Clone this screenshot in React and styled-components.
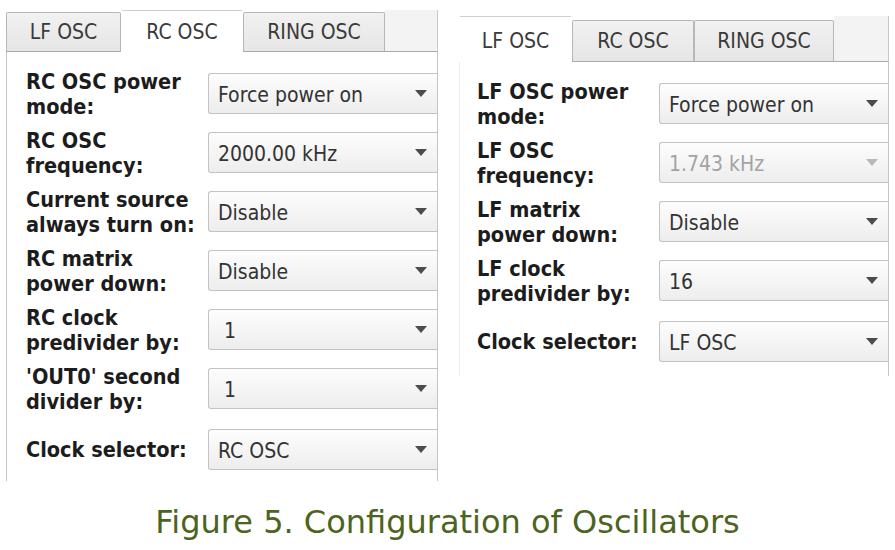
import React from 'react';
import styled, { createGlobalStyle } from 'styled-components';

const UI_FONT = '"DejaVu Sans Condensed", "DejaVu Sans", "Liberation Sans", sans-serif';

const GlobalStyle = createGlobalStyle`
  html, body {
    margin: 0;
    background: #fff;
  }
`;

const Page = styled.div`
  width: 895px;
  height: 550px;
  display: flex;
  flex-direction: column;
  overflow: hidden;
`;

const Figures = styled.div`
  display: flex;
  align-items: flex-start;
  gap: 21px;
  padding-left: 6px;
`;

const Panel = styled.div`
  width: ${(p) => p.$width}px;
  margin-top: ${(p) => p.$top}px;
  display: flex;
  flex-direction: column;
  font-family: ${UI_FONT};
  font-stretch: condensed;
`;

const TabBar = styled.div`
  display: flex;
  align-items: flex-end;
  height: ${(p) => p.$height}px;
`;

const Tab = styled.div`
  box-sizing: border-box;
  width: ${(p) => p.$width}px;
  height: ${(p) => (p.$active ? '100%' : `${p.$height}px`)};
  display: flex;
  align-items: center;
  justify-content: center;
  font-size: 21px;
  color: #3a3a3a;
  background: ${(p) => (p.$active ? '#fff' : 'linear-gradient(#f1f1f1, #e6e6e6)')};
  border: 1px solid ${(p) => (p.$active ? 'transparent' : '#b7b7b7')};
  border-top-color: ${(p) => (p.$active ? '#cfcfcf' : '#b7b7b7')};
  border-bottom: ${(p) => (p.$active ? 'none' : '1px solid #a9a9a9')};
  border-radius: 2px 2px 0 0;
  padding-top: ${(p) => (p.$active ? p.$lift - 2 : 0)}px;
`;

const Filler = styled.div`
  box-sizing: border-box;
  flex: 1;
  height: 100%;
  background: #f3f3f3;
  border-right: 1px solid #c9c9c9;
  border-bottom: 1px solid #a9a9a9;
`;

const Body = styled.div`
  box-sizing: border-box;
  display: grid;
  grid-template-columns: 182px 1fr;
  grid-auto-rows: 41px;
  row-gap: 18px;
  padding: 21px 0 ${(p) => p.$bottom}px ${(p) => p.$left}px;
  border-left: 1px solid ${(p) => p.$edge};
  border-right: 1px solid #c4c4c4;
  overflow: hidden;
`;

const Label = styled.div`
  display: flex;
  align-items: center;
  height: 41px;
  margin-top: ${(p) => (p.$last ? 2 : 0)}px;
  font-size: 21.5px;
  font-weight: bold;
  line-height: 25px;
  color: #1c1c1c;
  white-space: pre-line;
`;

const Select = styled.div`
  box-sizing: border-box;
  height: 41px;
  margin-top: ${(p) => (p.$last ? 2 : 0)}px;
  display: flex;
  align-items: center;
  justify-content: space-between;
  padding: 0 9px;
  border: 1px solid #c3c3c3;
  border-right: none;
  border-radius: 3px 0 0 3px;
  background: linear-gradient(#fdfdfd, #ededed);
  font-size: 21px;
  color: ${(p) => (p.$disabled ? '#a3a3a3' : '#333')};
`;

const Value = styled.span`
  padding-top: 3px;
`;

const Arrow = styled.span`
  width: 0;
  height: 0;
  margin-right: 1px;
  border-left: 6px solid transparent;
  border-right: 6px solid transparent;
  border-top: 7px solid ${(p) => (p.$disabled ? '#b8b8b8' : '#4c4c4c')};
`;

const Caption = styled.div`
  margin-top: 21px;
  text-align: center;
  font-family: "DejaVu Sans", Verdana, sans-serif;
  font-size: 32px;
  line-height: 40px;
  color: #4d6421;
`;

const rcRows = [
  ['RC OSC power\nmode:', 'Force power on'],
  ['RC OSC\nfrequency:', '2000.00 kHz'],
  ['Current source\nalways turn on:', 'Disable'],
  ['RC matrix\npower down:', 'Disable'],
  ['RC clock\npredivider by:', '\u00a01'],
  ["'OUT0' second\ndivider by:", '\u00a01'],
  ['Clock selector:', 'RC OSC'],
];

const lfRows = [
  ['LF OSC power\nmode:', 'Force power on'],
  ['LF OSC\nfrequency:', '1.743 kHz', true],
  ['LF matrix\npower down:', 'Disable'],
  ['LF clock\npredivider by:', '16'],
  ['Clock selector:', 'LF OSC'],
];

function OscPanel({ active, rows, width, top, barHeight, lift, widths, left, edge, bottom }) {
  const names = ['LF OSC', 'RC OSC', 'RING OSC'];
  return (
    <Panel $width={width} $top={top}>
      <TabBar $height={barHeight}>
        {names.map((n, i) => (
          <Tab
            key={n}
            $width={widths[i]}
            $active={n === active}
            $height={barHeight - lift}
            $lift={lift}
          >
            {n}
          </Tab>
        ))}
        <Filler />
      </TabBar>
      <Body $left={left} $edge={edge} $bottom={bottom}>
        {rows.map(([label, value, disabled], i) => {
          const last = i === rows.length - 1;
          return (
            <React.Fragment key={label}>
              <Label $last={last}>{label}</Label>
              <Select $disabled={disabled} $last={last}>
                <Value>{value}</Value>
                <Arrow $disabled={disabled} />
              </Select>
            </React.Fragment>
          );
        })}
      </Body>
    </Panel>
  );
}

export default function App() {
  return (
    <Page>
      <GlobalStyle />
      <Figures>
        <OscPanel
          active="RC OSC"
          rows={rcRows}
          width={432}
          top={10}
          barHeight={42}
          lift={2}
          widths={[115, 122, 142]}
          left={19}
          edge="#c4c4c4"
          bottom={13}
        />
        <OscPanel
          active="LF OSC"
          rows={lfRows}
          width={430}
          top={16}
          barHeight={46}
          lift={4}
          widths={[113, 122, 140]}
          left={17}
          edge="#ececec"
          bottom={16}
        />
      </Figures>
      <Caption>Figure 5. Configuration of Oscillators</Caption>
    </Page>
  );
}
